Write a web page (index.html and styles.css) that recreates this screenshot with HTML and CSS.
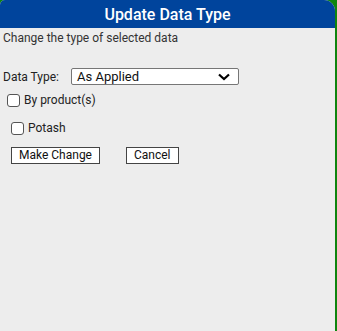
FILE: index.html
```html
<!DOCTYPE html>
<html lang="en">
<head>
    <meta charset="UTF-8">
    <meta name="viewport" content="width=device-width, initial-scale=1.0">
    <title>Update Data Type</title>
    <link rel="stylesheet" href="styles.css">
</head>
<body>
    <div class="dialog">
        <div class="dialog-header">Update Data Type</div>
        <div class="dialog-body">
            <p class="intro">Change the type of selected data</p>

            <div class="field-row">
                <label class="field-label">Data Type:</label>
                <div class="select-box">
                    <span>As Applied</span>
                    <svg class="chevron" width="12" height="8" viewBox="0 0 12 8">
                        <path d="M1 1.5 L6 6 L11 1.5" fill="none" stroke="#000" stroke-width="2.2"/>
                    </svg>
                </div>
            </div>

            <label class="check-row">
                <span class="check-box"></span>
                <span>By product(s)</span>
            </label>

            <label class="check-row nested">
                <span class="check-box"></span>
                <span>Potash</span>
            </label>

            <div class="actions">
                <button class="btn">Make Change</button>
                <button class="btn">Cancel</button>
            </div>
        </div>
    </div>
</body>
</html>
```

FILE: styles.css
```css
* {
    margin: 0;
    padding: 0;
    box-sizing: border-box;
}

body {
    background: #0e850e;
    font-family: Roboto, 'Liberation Sans', sans-serif;
    font-size: 12px;
    color: #222;
    width: 337px;
    height: 331px;
    overflow: hidden;
}

.dialog {
    width: 335px;
    height: 331px;
    background: #ededed;
    border-radius: 5px 11px 0 0;
    overflow: hidden;
}

.dialog-header {
    background: #00449c;
    color: #fff;
    font-size: 16px;
    font-weight: 500;
    text-align: center;
    height: 28px;
    line-height: 29px;
}

.dialog-body {
    padding: 3px 3px 0;
}

.intro {
    color: #333;
    line-height: 14px;
}

.field-row {
    display: flex;
    align-items: center;
    margin-top: 23px;
}

.field-label {
    width: 68px;
}

.select-box {
    width: 168px;
    height: 17px;
    border: 1px solid #767676;
    border-radius: 2px;
    background: #fff;
    display: flex;
    align-items: center;
    justify-content: space-between;
    padding: 0 8px 0 5px;
    color: #111;
    font-size: 13px;
}

.chevron {
    display: block;
}

.check-row {
    display: flex;
    align-items: center;
    gap: 4px;
    margin-top: 8px;
    margin-left: 4px;
    height: 14px;
}

.check-row.nested {
    margin-top: 14px;
    margin-left: 8px;
}

.check-box {
    width: 13px;
    height: 13px;
    border: 1px solid #555;
    border-radius: 3px;
    background: #fff;
}

.actions {
    display: flex;
    gap: 25px;
    margin-top: 12px;
    margin-left: 8px;
}

.btn {
    font-family: Roboto, 'Liberation Sans', sans-serif;
    font-size: 12px;
    color: #111;
    background: #fff;
    border: 1px solid #444;
    height: 17px;
    padding: 0 7px;
    line-height: 15px;
}

.btn + .btn {
    margin-left: 1px;
}
```
